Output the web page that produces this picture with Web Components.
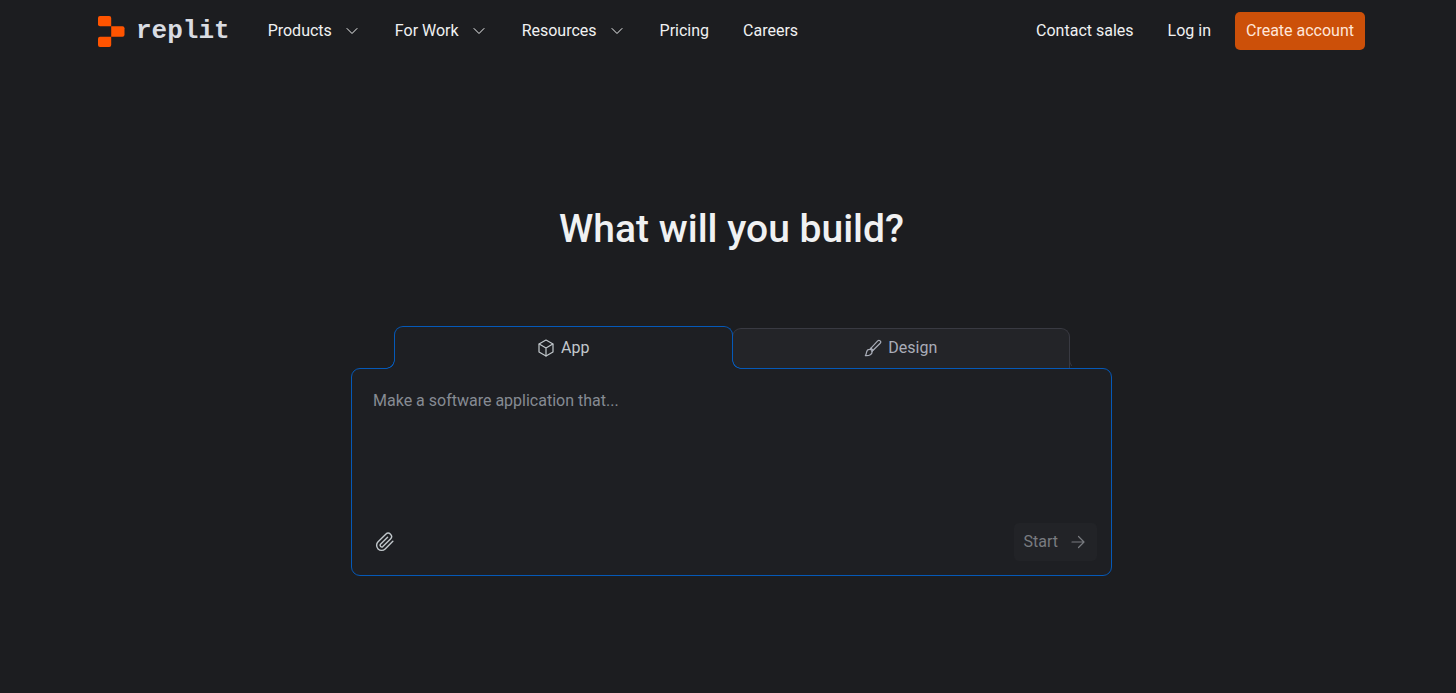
<!DOCTYPE html>
<html lang="en">
<head>
<meta charset="utf-8">
<meta name="viewport" content="width=device-width, initial-scale=1">
<title>Replit</title>
<style>
  :root {
    --bg: #1c1d20;
    --panel: #1e1f23;
    --raised: #232428;
    --line: #393a42;
    --accent: #0559b8;
    --text: #f0f1f2;
    --muted: #c2c8cc;
    --dim: #868b93;
  }
  * { box-sizing: border-box; }
  body {
    margin: 0;
    padding-left: 7px;
    min-height: 100vh;
    background: var(--bg);
    color: var(--text);
    font: 16px/24px Roboto, "Liberation Sans", sans-serif;
  }
</style>
</head>
<body>
<site-header></site-header>
<main>
  <prompt-hero heading="What will you build?"></prompt-hero>
</main>

<script>
// Logo: three blocks and the wordmark
class SiteLogo extends HTMLElement {
  constructor() {
    super();
    this.attachShadow({ mode: 'open' });
    this.shadowRoot.innerHTML = `
      <style>
        :host { display: block; }
        a { display: flex; align-items: center; gap: 11px; color: #d9dce2; text-decoration: none; }
        svg { display: block; }
        span { font: bold 26px/32px "Liberation Mono", monospace; }
      </style>
      <a href="#">
        <svg width="27" height="31" viewBox="0 0 27 31" fill="#ff5400" aria-hidden="true">
          <path d="M2 0h9.200a2 2 0 0 1 2 2v8.300H2a2 2 0 0 1-2-2V2a2 2 0 0 1 2-2z"/>
          <path d="M13.200 10.300h11.300a2 2 0 0 1 2 2v6.400a2 2 0 0 1-2 2H13.200z"/>
          <path d="M2 20.700h11.200V29a2 2 0 0 1-2 2H2a2 2 0 0 1-2-2v-6.300a2 2 0 0 1 2-2z"/>
        </svg>
        <span>replit</span>
      </a>
    `;
  }
}
customElements.define('site-logo', SiteLogo);

// Nav entry: a link, or a button with a chevron when it has the "menu" attribute
class NavItem extends HTMLElement {
  constructor() {
    super();
    this.attachShadow({ mode: 'open' });
  }

  connectedCallback() {
    const isMenu = this.hasAttribute('menu');
    this.shadowRoot.innerHTML = `
      <style>
        :host { display: block; white-space: nowrap; }
        a, button {
          display: flex; align-items: center; gap: 11px;
          margin: 0; padding: 0; border: 0; background: none;
          color: inherit; font: inherit; text-decoration: none; cursor: pointer;
        }
        :host([primary]) a { padding: 7px 11px; border-radius: 5px; background: #cc5009; color: #ffe6d9; }
        svg { display: block; }
      </style>
      ${isMenu
        ? `<button type="button" aria-haspopup="true"><slot></slot>
            <svg width="18" height="18" viewBox="0 0 18 18" fill="none" stroke="currentColor" stroke-width="1" stroke-linecap="round" stroke-linejoin="round" aria-hidden="true"><path d="M4 6.500l5 5 5-5"/></svg>
          </button>`
        : `<a href="#"><slot></slot></a>`}
    `;
  }
}
customElements.define('nav-item', NavItem);

class SiteHeader extends HTMLElement {
  constructor() {
    super();
    this.attachShadow({ mode: 'open' });
    this.shadowRoot.innerHTML = `
      <style>
        :host { display: block; padding: 0 91px; }
        header { display: flex; align-items: center; justify-content: space-between; min-height: 62px; }
        nav, .account { display: flex; align-items: center; gap: 34px; }
        site-logo { margin-right: 4px; }
        .account { gap: 24px; }
        .account div { display: flex; gap: 34px; }
      </style>
      <header>
        <nav>
          <site-logo></site-logo>
          <nav-item menu>Products</nav-item>
          <nav-item menu>For Work</nav-item>
          <nav-item menu>Resources</nav-item>
          <nav-item>Pricing</nav-item>
          <nav-item>Careers</nav-item>
        </nav>
        <div class="account">
          <div>
            <nav-item>Contact sales</nav-item>
            <nav-item>Log in</nav-item>
          </div>
          <nav-item primary>Create account</nav-item>
        </div>
      </header>
    `;
  }
}
customElements.define('site-header', SiteHeader);

// Tab of the prompt box, the icon comes in through a slot
class PromptTab extends HTMLElement {
  constructor() {
    super();
    this.attachShadow({ mode: 'open' });
    this.shadowRoot.innerHTML = `
      <style>
        :host { display: block; position: relative; flex: 1; }
        button {
          display: flex; align-items: center; justify-content: center; gap: 6px;
          box-sizing: border-box; width: 100%; height: 40px; margin: 0; padding: 0 0 2px;
          border: 1px solid var(--line); border-bottom: 0; border-radius: 9px 9px 0 0;
          background: var(--raised); color: #a9adb8; font: inherit; cursor: pointer;
        }
        :host([selected]) { z-index: 1; margin-right: -1px; margin-bottom: -1px; }
        :host([selected]) button {
          height: 43px; padding: 0; border-color: var(--accent);
          background: var(--panel); color: var(--muted);
        }
        /* curved feet where the tab meets the box */
        :host::before, :host::after { position: absolute; bottom: 0; width: 9px; height: 9px; }
        :host([selected])::before {
          content: ""; left: -8px;
          background: radial-gradient(circle at 0 0, var(--bg) 7.500px, var(--accent) 8px, var(--accent) 8.500px, var(--panel) 9px);
        }
        :host([selected])::after {
          content: ""; right: -8px;
          background: radial-gradient(circle at 100% 0, var(--raised) 7.500px, var(--accent) 8px, var(--accent) 8.500px, var(--panel) 9px);
        }
        :host(:not([selected]))::after {
          content: ""; right: -8px; box-sizing: border-box;
          border-left: 1px solid var(--line); border-bottom-left-radius: 8px;
          clip-path: inset(0 6px 0 0);
        }
      </style>
      <button type="button" role="tab"><slot name="icon"></slot><slot></slot></button>
    `;
  }

  connectedCallback() {
    this.shadowRoot.querySelector('button').setAttribute('aria-selected', this.hasAttribute('selected'));
  }
}
customElements.define('prompt-tab', PromptTab);

class PromptBox extends HTMLElement {
  constructor() {
    super();
    this.attachShadow({ mode: 'open' });
    this.shadowRoot.innerHTML = `
      <style>
        :host { display: block; }
        svg { display: block; fill: none; stroke: currentColor; stroke-linecap: round; stroke-linejoin: round; }
        .tabs { display: flex; align-items: flex-end; padding: 0 42px 0 43px; }
        form {
          display: flex; flex-direction: column;
          padding: 20px 14px 14px;
          border: 1px solid var(--accent); border-radius: 9px; background: var(--panel);
        }
        textarea {
          display: block; box-sizing: border-box; width: 100%; height: 134px; padding: 0 7px;
          border: 0; outline: 0; resize: none; background: none; color: var(--text); font: inherit;
        }
        textarea::placeholder { color: var(--dim); opacity: 1; }
        .actions { display: flex; align-items: center; justify-content: space-between; }
        button { margin: 0; border: 0; background: none; font: inherit; cursor: pointer; }
        .attach { padding: 9px; color: var(--muted); }
        .start {
          display: flex; align-items: center; gap: 11px; padding: 7px 10px;
          border-radius: 5px; background: #222327; color: #797b80;
        }
      </style>
      <div class="tabs" role="tablist">
        <prompt-tab selected>
          <svg slot="icon" width="18" height="18" viewBox="0 0 18 18" stroke-width="1.200" aria-hidden="true">
            <path d="M9 1l7 4v8l-7 4-7-4V5z"/><path d="M2.200 5.100L9 9l6.800-3.900M9 9v8"/>
          </svg>App
        </prompt-tab>
        <prompt-tab>
          <svg slot="icon" width="18" height="18" viewBox="0 0 18 18" stroke-width="1.200" aria-hidden="true">
            <path d="M7 9.200l6.700-7.300a1.700 1.700 0 0 1 2.500 2.400L9.100 11.200"/>
            <path d="M7 9.200l2.100 2M7 9.200l-1.200 1.200M9.100 11.200l-1.200 1.300"/>
            <path d="M5.800 10.400c1.400-.1 2.400.8 2.400 2.200 0 2.600-2.600 4.400-6.900 4 1-.9.900-1.900 1.200-3.300.3-1.700 1.700-2.900 3.300-2.900z"/>
          </svg>Design
        </prompt-tab>
      </div>
      <form>
        <textarea aria-label="Describe your app" placeholder="Make a software application that..."></textarea>
        <div class="actions">
          <button class="attach" type="button" aria-label="Attach a file">
            <svg width="20" height="20" viewBox="0 0 24 24" stroke-width="1.700" aria-hidden="true">
              <path d="M21.400 11.100l-9.200 9.200a6 6 0 0 1-8.500-8.500l9.200-9.200a4 4 0 0 1 5.700 5.700l-9.200 9.200a2 2 0 0 1-2.800-2.800l8.500-8.500"/>
            </svg>
          </button>
          <button class="start" type="button">Start
            <svg width="18" height="18" viewBox="0 0 18 18" stroke-width="1.200" aria-hidden="true">
              <path d="M3 9h12M9.500 3.500L15 9l-5.500 5.500"/>
            </svg>
          </button>
        </div>
      </form>
    `;
  }
}
customElements.define('prompt-box', PromptBox);

class PromptHero extends HTMLElement {
  constructor() {
    super();
    this.attachShadow({ mode: 'open' });
    this.shadowRoot.innerHTML = `
      <style>
        :host { display: flex; flex-direction: column; align-items: center; gap: 73px; padding: 143px 24px 0; }
        h1 { margin: 0; font-size: 39px; line-height: 48px; font-weight: 500; text-align: center; }
        prompt-box { width: 100%; max-width: 761px; }
      </style>
      <h1></h1>
      <prompt-box></prompt-box>
    `;
  }

  connectedCallback() {
    this.shadowRoot.querySelector('h1').textContent = this.getAttribute('heading');
  }
}
customElements.define('prompt-hero', PromptHero);
</script>
</body>
</html>
